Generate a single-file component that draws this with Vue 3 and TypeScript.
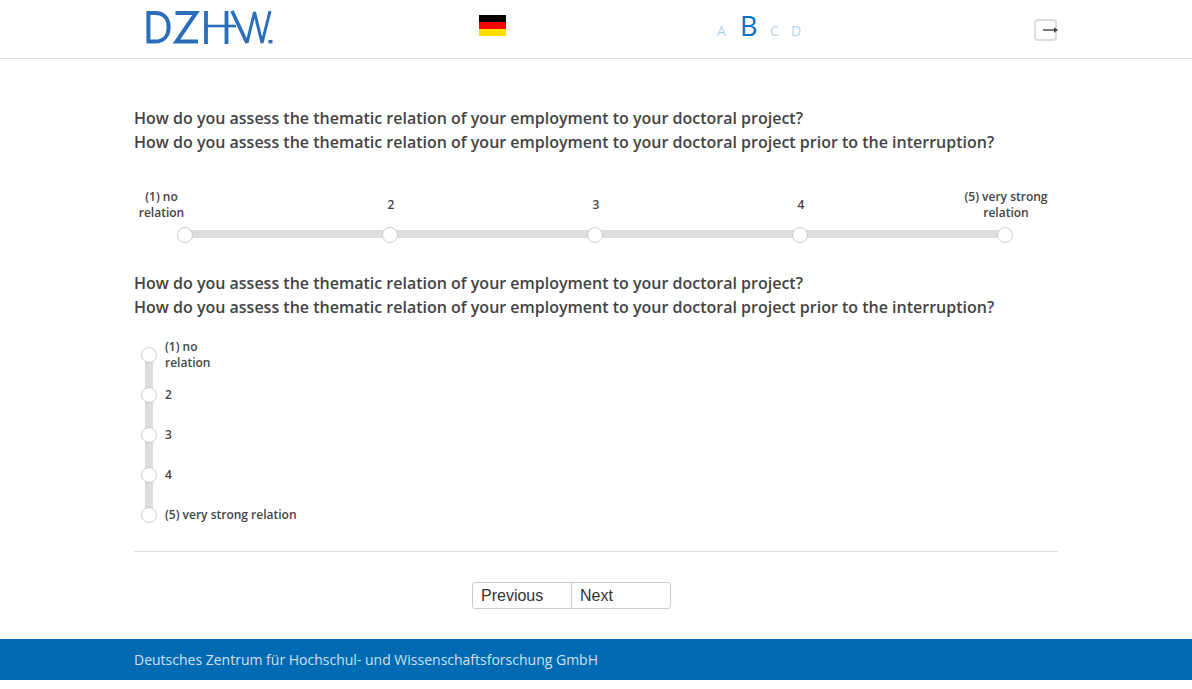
<script setup lang="ts">
const q1 = 'How do you assess the thematic relation of your employment to your doctoral project?'
const q2 = 'How do you assess the thematic relation of your employment to your doctoral project prior to the interruption?'
const labels: string[] = ['(1) no relation', '2', '3', '4', '(5) very strong relation']
const versions: string[] = ['A', 'B', 'C', 'D']
</script>

<template>
  <div class="page">
    <header class="header">
      <div class="bar">
        <svg class="logo" width="130" height="36" viewBox="145 10 130 36" fill="none" stroke="#2a6ebb" stroke-width="4" aria-label="DZHW">
          <path d="M148.4 12 V41.6 H155 C164 41.6 168.6 35.5 168.6 27 C168.6 18.5 164 13 155 13 H146.5" />
          <path d="M175.5 13 H196 L176.5 41.6 H198" />
          <path d="M206 11 V44 M226.5 11 V44" stroke-width="3.8" />
          <path d="M206 26 H236" stroke-width="2.6" />
          <path d="M232 11 L247 43" stroke-width="3.6" />
          <path d="M247 43 L254.5 12 L262 43 L270 11" stroke-width="3" />
          <rect x="268.5" y="40" width="4" height="3.4" fill="#2a6ebb" stroke="none" />
        </svg>
        <div class="flag"><i class="black"></i><i class="red"></i><i class="gold"></i></div>
        <nav class="versions">
          <span v-for="v in versions" :key="v" class="version" :class="{ active: v === 'B' }">{{ v }}</span>
        </nav>
        <button class="logout" aria-label="Logout">
          <svg class="arrow" width="16" height="8" viewBox="0 0 16 8"><path d="M0 4 H11" stroke="#444" stroke-width="1.4" /><path d="M11 1.2 L15 4 L11 6.8 Z" fill="#444" /></svg>
        </button>
      </div>
    </header>

    <main class="content">
      <h2 class="question">{{ q1 }}<br />{{ q2 }}</h2>
      <div class="scale">
        <div class="scale-labels">
          <div v-for="(l, i) in labels" :key="l" class="cell" :class="'cell-' + i"><span>{{ l }}</span></div>
        </div>
        <div class="track">
          <span v-for="l in labels" :key="l" class="handle"></span>
        </div>
      </div>

      <h2 class="question second">{{ q1 }}<br />{{ q2 }}</h2>
      <div class="vscale">
        <div class="vtrack"></div>
        <div v-for="(l, i) in labels" :key="l" class="row">
          <span class="handle"></span>
          <span class="row-label" :class="{ narrow: i === 0 }">{{ l }}</span>
        </div>
      </div>

      <hr class="divider" />
      <div class="pager">
        <button class="btn">Previous</button>
        <button class="btn">Next</button>
      </div>
    </main>

    <footer class="footer">
      <div class="footer-inner">Deutsches Zentrum für Hochschul- und Wissenschaftsforschung GmbH</div>
    </footer>
  </div>
</template>

<style>
html, body { margin: 0; background: #fff; }
</style>

<style scoped>
.page { font-family: "Open Sans", sans-serif; color: #444; min-height: 689px; background: #fff; }
.header { height: 58px; border-bottom: 1px solid #ddd; }
.bar { width: 924px; margin-left: 134px; height: 58px; display: flex; position: relative; }
.logo { margin: 10px 0 0 11px; flex: none; }
.flag { margin: 15px 0 0 204px; width: 27px; height: 21px; display: flex; flex-direction: column; flex: none; }
.flag i { flex: 1; display: block; }
.black { background: #000; }
.red { background: #f00; }
.gold { background: #ffdf00; }
.versions { margin: 10px 0 0 211px; height: 32px; display: flex; align-items: baseline; gap: 14px; flex: none; }
.version { font-size: 14px; line-height: 19px; color: #b4d4ee; width: 9px; text-align: left; }
.version:nth-child(3) { width: 8px; margin-right: -1px; }
.version.active { font-size: 27px; font-weight: 500; line-height: 32px; color: #0071c5; width: 16px; }
.logout { margin: 19px 1px 0 auto; width: 23px; height: 22px; padding: 0; background: #fff; border: 2px solid #ddd; border-radius: 4px; position: relative; flex: none; }
.arrow { position: absolute; left: 7px; top: 5px; }

.content { width: 924px; margin-left: 134px; padding-top: 47px; }
.question { margin: 0; font-size: 16px; line-height: 24px; font-weight: 600; color: #444; }
.second { margin-top: 33px; }
.scale { margin-top: 35px; }
.scale-labels { display: grid; grid-template-columns: 154.5px 205px 205px 205px 154.5px; height: 32px; align-items: center; font-size: 12px; line-height: 16px; font-weight: 600; text-align: center; }
.cell-0 span { display: block; width: 55px; }
.cell-4 span { display: block; width: 85px; margin-left: 60px; }
.track { margin: 9px 0 0 51px; width: 820px; height: 8px; background: #ddd; display: flex; justify-content: space-between; align-items: center; }
.track .handle { margin: 2px -8px 0; }
.handle { display: block; flex: none; box-sizing: border-box; width: 16px; height: 16px; border-radius: 50%; background: #fff; border: 1px solid #ccc; }

.vscale { position: relative; margin-top: 16px; padding-left: 7px; }
.vtrack { position: absolute; left: 11px; top: 20px; width: 8px; height: 160px; background: #ddd; }
.row { height: 40px; display: flex; align-items: center; gap: 8px; position: relative; font-size: 12px; line-height: 16px; font-weight: 600; }
.narrow { width: 55px; }
.divider { margin: 16px 0 0; border: 0; border-top: 1px solid #ddd; }
.pager { display: flex; justify-content: center; margin: 30px 0; padding-right: 49px; }
.btn { width: 100px; height: 27px; box-sizing: border-box; background: #fff; border: 1px solid #ccc; font: 16px "Liberation Sans", Arial, sans-serif; color: #333; text-align: left; padding: 0 0 0 8px; }
.btn:first-child { border-radius: 3px 0 0 3px; }
.btn:last-child { border-radius: 0 3px 3px 0; margin-left: -1px; }
.footer { height: 41px; background: #006bb3; }
.footer-inner { margin-left: 134px; font-size: 14px; line-height: 41px; color: #cfe0ef; }
</style>
